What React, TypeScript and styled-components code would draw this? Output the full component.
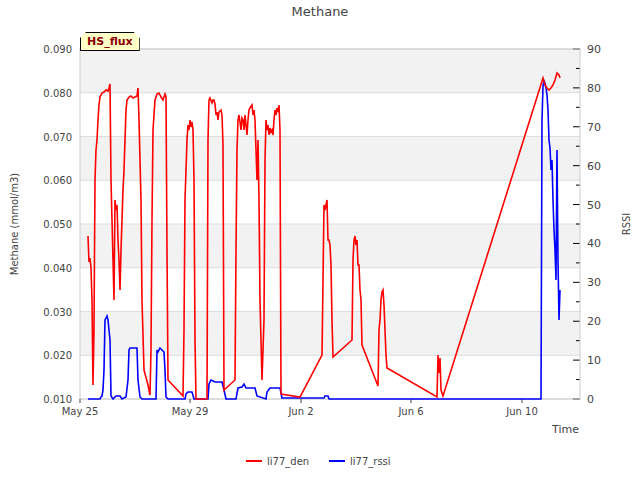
import React from "react";
import styled, { createGlobalStyle } from "styled-components";

const G = createGlobalStyle`body{margin:0;background:#fff;font-family:"DejaVu Sans",sans-serif;}`;
const Wrap = styled.div`width:640px;height:480px;position:relative;`;
const Title = styled.div`position:absolute;left:0;right:0;top:4px;text-align:center;font-size:13px;color:#444;`;
const Badge = styled.div`position:absolute;left:80px;top:32px;padding:2px 6px;font-size:11px;font-weight:bold;color:#8b0000;background:#ffffc8;border:1px solid #000;clip-path:polygon(6px 0,calc(100% - 6px) 0,100% 6px,100% 100%,0 100%,0 6px);`;

const red = "88,236 89,262 90,258 91,268 92,300 93,385 94,330 95,180 96,150 97,140 98,120 99,105 100,97 102,93 104,92 106,90 108,91 109,88 110,84 111,180 113,260 114,300 115,200 116,210 117,205 118,240 119,260 120,290 121,250 123,190 124,170 125,140 126,110 127,100 129,97 131,96 133,98 135,97 137,96 138,88 139,120 141,200 142,300 144,370 148,385 150,395 151,350 152,220 153,130 154,115 155,100 157,94 159,93 161,97 163,100 165,94 166,97 167,250 168,380 183,396 184,330 185,200 186,170 187,140 188,125 189,130 190,120 191,127 192,122 193,130 194,180 195,340 196,399 207,399 208,140 209,100 210,98 212,103 213,100 214,100 215,104 216,115 217,112 218,120 219,112 221,110 222,115 223,145 224,390 235,380 236,250 237,150 238,120 239,115 240,122 241,130 242,118 243,120 244,130 245,115 246,125 247,135 248,120 249,110 250,108 252,105 253,115 254,110 255,120 256,150 257,180 258,140 259,200 260,300 262,380 264,320 265,160 266,120 267,130 268,125 269,135 270,128 271,132 272,130 273,135 274,120 275,110 276,115 277,108 278,112 279,105 280,130 281,394 300,397 322,355 323,280 324,205 325,210 326,205 327,200 328,240 329,240 330,245 331,265 332,320 333,357 352,340 353,260 354,240 355,236 356,245 357,240 358,265 359,265 360,290 361,300 362,345 378,386 379,330 380,320 381,300 382,292 383,290 384,305 385,330 386,355 387,368 437,397 438,355 439,373 440,358 441,390 443,396 543,78 545,85 547,88 549,90 551,88 553,85 555,80 557,73 559,75 560,78";
const blue = "88,399 100,399 101,397 102,396 103,390 104,370 105,320 106,318 107,316 108,320 109,330 110,340 111,396 113,399 116,396 120,396 122,399 126,397 128,380 129,350 130,348 137,348 138,380 140,397 142,399 156,399 157,350 158,352 160,348 162,350 164,352 165,370 166,397 168,399 185,399 186,394 188,392 192,392 194,399 208,399 209,384 211,380 215,382 222,382 224,390 226,399 236,399 238,388 242,387 244,384 246,388 255,388 257,396 266,399 267,392 270,388 280,388 282,398 324,398 325,396 328,396 329,399 541,399 542,120 543,86 544,80 546,88 547,95 548,110 549,140 550,148 551,170 552,160 553,200 554,230 555,250 556,280 557,150 558,260 559,320 560,290";

const T = { fontSize: 10, fill: "#444", fontFamily: "DejaVu Sans" } as const;

export default function App() {
  const left = [0.09, 0.08, 0.07, 0.06, 0.05, 0.04, 0.03, 0.02, 0.01];
  const xs: [string, number][] = [["May 25", 80], ["May 29", 190], ["Jun 2", 301], ["Jun 6", 411], ["Jun 10", 522]];
  return (
    <Wrap>
      <G />
      <svg width={640} height={480} style={{ position: "absolute", left: 0, top: 0 }}>
        {[49, 137, 224, 312].map(y => <rect key={y} x={80} y={y} width={500} height={44} fill="#f2f2f2" />)}
        {left.map((v, i) => {
          const y = 49 + i * 43.75;
          return <g key={i}>
            <line x1={80} x2={580} y1={y} y2={y} stroke="#ddd" />
            <text x={72} y={y + 4} textAnchor="end" {...T}>{v.toFixed(3)}</text>
          </g>;
        })}
        {Array.from({ length: 19 }).map((_, i) => {
          const y = 399 - i * 350 / 18;
          return <line key={i} x1={i % 2 ? 576 : 573} x2={580} y1={y} y2={y} stroke="#000" />;
        })}
        {Array.from({ length: 10 }).map((_, i) => (
          <text key={i} x={587} y={399 - i * 350 / 9 + 4} {...T} fontSize={11}>{i * 10}</text>
        ))}
        <rect x={80} y={49} width={500} height={350} fill="none" stroke="#ccc" />
        {xs.map(([l, x]) => <g key={l}>
          <line x1={x} x2={x} y1={399} y2={403} stroke="#444" />
          <text x={x} y={415} textAnchor="middle" {...T}>{l}</text>
        </g>)}
        <text x={579} y={433} textAnchor="end" {...T} fontSize={11}>Time</text>
        <text transform="translate(18,224) rotate(-90)" textAnchor="middle" {...T}>Methane (mmol/m3)</text>
        <text transform="translate(630,224) rotate(-90)" textAnchor="middle" {...T}>RSSI</text>
        <polyline points={blue} fill="none" stroke="#0000ff" strokeWidth={1.6} />
        <polyline points={red} fill="none" stroke="#ff0000" strokeWidth={1.6} />
        <line x1={246} x2={262} y1={461} y2={461} stroke="#ff0000" strokeWidth={2} />
        <text x={267} y={465} {...T}>li77_den</text>
        <line x1={329} x2={345} y1={461} y2={461} stroke="#0000ff" strokeWidth={2} />
        <text x={350} y={465} {...T}>li77_rssi</text>
      </svg>
      <Title>Methane</Title>
      <Badge>HS_flux</Badge>
    </Wrap>
  );
}
